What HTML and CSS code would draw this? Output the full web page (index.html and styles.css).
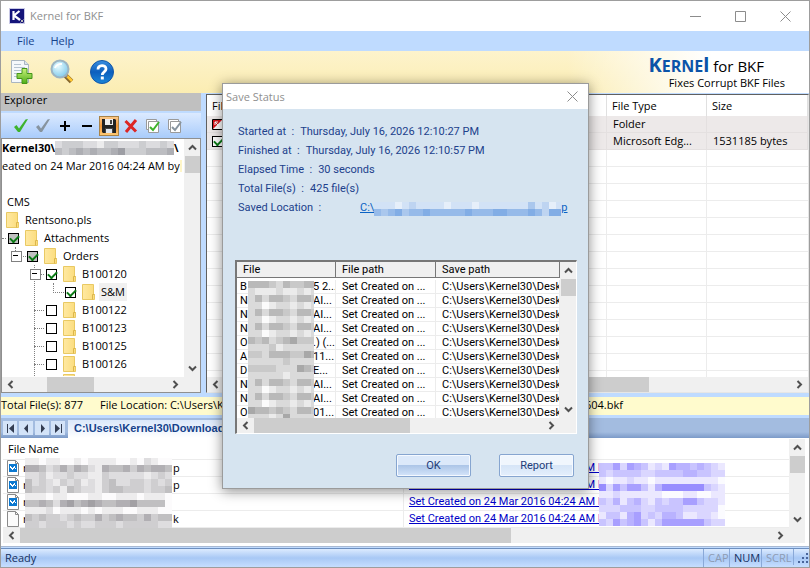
FILE: index.html
```html
<!DOCTYPE html>
<html lang="en">
<head>
<meta charset="utf-8">
<title>Kernel for BKF</title>
<link rel="stylesheet" href="styles.css">
</head>
<body>
<svg class="defs" width="0" height="0" aria-hidden="true">
  <defs>
    <linearGradient id="gFolder" x1="0" x2="1"><stop offset="0" stop-color="#ffe9a2"/><stop offset="1" stop-color="#fbdc7c"/></linearGradient>
    <linearGradient id="gHelp" x1="0" y1="0" x2="0" y2="1"><stop offset="0" stop-color="#3a8fe0"/><stop offset=".5" stop-color="#0d5fbd"/><stop offset="1" stop-color="#1b86d8"/></linearGradient>
    <linearGradient id="gPlus" x1="0" y1="0" x2="0" y2="1"><stop offset="0" stop-color="#c8f27a"/><stop offset="1" stop-color="#4fae18"/></linearGradient>
    <radialGradient id="gLens" cx=".4" cy=".35" r=".7"><stop offset="0" stop-color="#e8fbff"/><stop offset="1" stop-color="#7cc8ea"/></radialGradient>
    <symbol id="folder" viewBox="0 0 13 16"><path d="M.5.5h11v10h1v5H.5z" fill="url(#gFolder)" stroke="#e9c963"/><path d="M10.500 15.500v-5h2" fill="none" stroke="#dcb64a"/></symbol>
    <symbol id="up" viewBox="0 0 9 7"><path d="M1 5.500 4.500 2 8 5.500" fill="none" stroke="#505050" stroke-width="2"/></symbol>
    <symbol id="down" viewBox="0 0 9 7"><path d="M1 1.500 4.500 5 8 1.500" fill="none" stroke="#505050" stroke-width="2"/></symbol>
    <symbol id="left" viewBox="0 0 7 9"><path d="M5.500 1 2 4.500 5.500 8" fill="none" stroke="#505050" stroke-width="2"/></symbol>
    <symbol id="right" viewBox="0 0 7 9"><path d="M1.500 1 5 4.500 1.500 8" fill="none" stroke="#505050" stroke-width="2"/></symbol>
    <symbol id="image" viewBox="0 0 12 16"><path d="M.5.5h8l3 3v12H.5z" fill="#fff" stroke="#8a8a8a"/><path d="M8.500.5v3h3" fill="none" stroke="#8a8a8a"/><path d="M2 4h8v8H2z" fill="#0b78d0"/><path d="M3 6h1v1h1v1h1V7h1V6h1v2h1v1H8V8H7v1H6v1H5V9H4V8H3z" fill="#fff"/></symbol>
    <symbol id="page" viewBox="0 0 12 16"><path d="M.5.5h8l3 3v12H.5z" fill="#fbfbfb" stroke="#8a8a8a"/><path d="M8.500.5v3h3" fill="none" stroke="#8a8a8a"/></symbol>
  </defs>
</svg>

<div class="window">
  <header class="titlebar">
    <svg class="app-icon" width="16" height="16" viewBox="0 0 16 16"><path fill="#c9c9e6" d="M0 0h16v16H0z"/><path fill="#14147a" d="M1 1h14v14H1z"/><path d="M4.500 3v9M10.500 3 5 7.500l6 4.500" fill="none" stroke="#fff" stroke-width="2.200"/><path d="m11.500 11.500 3 3m0-3-3 3" stroke="#bbb"/></svg>
    <h1 class="title">Kernel for BKF</h1>
    <button class="caption" aria-label="Minimize"><svg width="11" height="11"><path d="M0 5.500h11" stroke="#8c8c8c"/></svg></button>
    <button class="caption" aria-label="Maximize"><svg width="11" height="11"><path d="M.5.5h10v10H.5z" fill="none" stroke="#8c8c8c"/></svg></button>
    <button class="caption" aria-label="Close"><svg width="11" height="11"><path d="m.5.5 10 10m0-10-10 10" stroke="#8c8c8c"/></svg></button>
  </header>
  <nav class="menu"><button>File</button><button>Help</button></nav>
  <div class="toolbar">
    <button class="tool" aria-label="Add file"><svg width="24" height="26" viewBox="0 0 24 26"><path d="M1.500 1.500h13l4 4v18h-17z" fill="#f5f8fb" stroke="#a9b5c0"/><path d="M14.500 1.500v4h4" fill="#dde5ec" stroke="#a9b5c0"/><path d="M4 5.500h7M4 8.500h11M4 11.500h7M4 14.500h4M4 17.500h3" stroke="#b6c3d0"/><path d="M12 9.500h5v5h5v5h-5v5h-5v-5H7v-5h5z" fill="url(#gPlus)" stroke="#45951a" stroke-linejoin="round"/></svg></button>
    <button class="tool" aria-label="Find"><svg width="24" height="26" viewBox="0 0 24 26"><path d="m15.500 16.500 6 6" stroke="#87672c" stroke-width="5"/><path d="m17 17 5 5" stroke="#ffc62f" stroke-width="2.500"/><path d="m14 15 3 3" stroke="#888" stroke-width="2"/><circle cx="10" cy="10" r="8.500" fill="url(#gLens)" stroke="#9db4c2" stroke-width="2"/><path d="M5 9a6 5 0 0 1 7-4" fill="none" stroke="#fff" stroke-width="2"/></svg></button>
    <button class="tool" aria-label="Help"><svg width="24" height="26" viewBox="0 0 24 26"><circle cx="12" cy="13" r="11.500" fill="url(#gHelp)" stroke="#1457a8"/><path d="M8 10.500c0-5 8-5 8-.5 0 3-3.700 2.800-3.700 6" fill="none" stroke="#fff" stroke-width="2.800"/><path d="M10.800 17.500h3v3h-3z" fill="#fff"/></svg></button>
    <div class="brand">
      <div class="brand-name"><b>K<small>ERNE</small>l</b> <span>for BKF</span></div>
      <div class="brand-tag">Fixes Corrupt BKF Files</div>
    </div>
  </div>

  <main class="main">
    <section class="explorer">
      <h2 class="explorer-title">Explorer</h2>
      <div class="explorer-tools">
        <button aria-label="Check"><svg width="14" height="14" viewBox="0 0 14 14"><path d="M0 8 2.500 6 5 9.500 11.500.5 14 0 6 13H4z" fill="#3eb32c"/></svg></button>
        <button aria-label="Uncheck"><svg width="14" height="14" viewBox="0 0 14 14"><path d="M0 8 2.500 6 5 9.500 11.500.5 14 0 6 13H4z" fill="#87949f"/></svg></button>
        <button aria-label="Expand"><svg width="14" height="14" viewBox="0 0 14 14"><path d="M7 2v10M2 7h10" stroke="#000" stroke-width="2"/></svg></button>
        <button aria-label="Collapse"><svg width="14" height="14" viewBox="0 0 14 14"><path d="M2 7h10" stroke="#000" stroke-width="2"/></svg></button>
        <button class="active" aria-label="Save"><svg width="14" height="14" viewBox="0 0 14 14"><path d="M0 0h13l1 1v13H1l-1-1z" fill="#222"/><path d="M3 0h8v6H3z" fill="#eee"/><path d="M8 1h2v4H8zM3 9h8v5H3z" fill="#444"/><path d="M4 10h6v4H4z" fill="#dfe6ef"/></svg></button>
        <button aria-label="Delete"><svg width="14" height="14" viewBox="0 0 14 14"><path d="M1.500 2 12 12.500M12 1 2 13" stroke="#dc2626" stroke-width="3"/></svg></button>
        <button aria-label="Check all"><svg width="14" height="14" viewBox="0 0 14 14"><path d="M.5.5h10v10H.5z" fill="#fff" stroke="#9a9a9a"/><path d="M2.500 2.500h10v11h-10z" fill="#fff" stroke="#9a9a9a"/><path d="m4 8 3 3 6-8" fill="none" stroke="#3eb32c" stroke-width="2"/></svg></button>
        <button aria-label="Uncheck all"><svg width="14" height="14" viewBox="0 0 14 14"><path d="M.5.5h10v10H.5z" fill="#fff" stroke="#9a9a9a"/><path d="M2.500 2.500h10v11h-10z" fill="#fff" stroke="#9a9a9a"/><path d="m4 8 3 3 6-8" fill="none" stroke="#87949f" stroke-width="2"/></svg></button>
      </div>
      <div class="tree-pane">
        <div class="tree-body">
          <ul class="tree">
            <li class="root"><b>Kernel30\</b><svg class="mosaic" data-ink="70,72,84" data-rows="23332213322232232|43454544563334445"></svg><b>\</b></li>
            <li>eated on 24 Mar 2016 04:24 AM by <i class="mark"></i></li>
            <li></li>
            <li class="indent">CMS</li>
            <li class="leaf"><svg class="folder"><use href="#folder"/></svg>Rentsono.pls</li>
            <li><i class="stub"></i><input class="grey" type="checkbox" checked aria-label="Attachments"><svg class="folder"><use href="#folder"/></svg>Attachments</li>
            <li><i class="lead"></i><i class="cell elbow box"></i><input class="grey" type="checkbox" checked aria-label="Orders"><svg class="folder"><use href="#folder"/></svg>Orders</li>
            <li><i class="lead"></i><i class="cell"></i><i class="cell tee box"></i><input type="checkbox" checked aria-label="B100120"><svg class="folder"><use href="#folder"/></svg>B100120</li>
            <li><i class="lead"></i><i class="cell"></i><i class="cell line"></i><i class="cell elbow"></i><input type="checkbox" checked aria-label="S&amp;M"><svg class="folder"><use href="#folder"/></svg><span class="selected">S&amp;M</span></li>
            <li><i class="lead"></i><i class="cell"></i><i class="cell tee"></i><input type="checkbox" aria-label="B100122"><svg class="folder"><use href="#folder"/></svg>B100122</li>
            <li><i class="lead"></i><i class="cell"></i><i class="cell tee"></i><input type="checkbox" aria-label="B100123"><svg class="folder"><use href="#folder"/></svg>B100123</li>
            <li><i class="lead"></i><i class="cell"></i><i class="cell tee"></i><input type="checkbox" aria-label="B100125"><svg class="folder"><use href="#folder"/></svg>B100125</li>
            <li><i class="lead"></i><i class="cell"></i><i class="cell tee"></i><input type="checkbox" aria-label="B100126"><svg class="folder"><use href="#folder"/></svg>B100126</li>
            <li class="cut"><i class="lead"></i><i class="cell"></i><i class="cell line"></i><i class="nobox"></i><svg class="folder"><use href="#folder"/></svg></li>
          </ul>
          <div class="vbar"><svg class="v"><use href="#up"/></svg><i class="thumb"></i><svg class="v end"><use href="#down"/></svg></div>
        </div>
        <div class="hbar tree-hbar"><svg class="h"><use href="#left"/></svg><i class="thumb"></i><svg class="h end"><use href="#right"/></svg></div>
      </div>
    </section>

    <section class="files">
      <div class="files-body">
        <table class="files-table">
          <colgroup><col class="c-name"><col class="c-type"><col></colgroup>
          <thead><tr><th>File Name</th><th>File Type</th><th>Size</th></tr></thead>
          <tbody>
            <tr><td><svg class="flag" width="11" height="11" viewBox="0 0 11 11"><path d="M.5.5h10v10H.5z" fill="#fff" stroke="#000"/><path d="M1 1h9L1 10z" fill="#d8141c"/><path d="m3 3 5 5M3 6V3h3" stroke="#fff" fill="none"/></svg></td><td>Folder</td><td></td></tr>
            <tr><td><input type="checkbox" checked aria-label="File"></td><td>Microsoft Edg...</td><td>1531185 bytes</td></tr>
          </tbody>
        </table>
      </div>
      <div class="hbar files-hbar"><svg class="h"><use href="#left"/></svg><i class="thumb"></i><svg class="h end"><use href="#right"/></svg></div>
    </section>
  </main>

  <div class="info"><span>Total File(s): 877</span><span class="location">File Location: C:\Users\Kernel30\Downloads</span><span class="tail">604.bkf</span></div>

  <section class="lower">
    <div class="tabs">
      <button aria-label="First"><svg width="9" height="9"><path d="M1 0h1v9H1zM8 0v9L3 4.500z" fill="#333d52"/></svg></button>
      <button aria-label="Previous"><svg width="9" height="9"><path d="M6 0v9L2 4.500z" fill="#333d52"/></svg></button>
      <button aria-label="Next"><svg width="9" height="9"><path d="M3 0v9l4-4.500z" fill="#333d52"/></svg></button>
      <button aria-label="Last"><svg width="9" height="9"><path d="M7 0h1v9H7zM1 0v9l5-4.500z" fill="#333d52"/></svg></button>
      <a class="tab" href="#results">C:\Users\Kernel30\Downloads</a>
    </div>
    <div class="results" id="results">
      <div class="results-body">
        <div class="results-view">
          <table class="results-table">
            <colgroup><col class="r-name"><col></colgroup>
            <thead><tr><th>File Name</th><th></th></tr></thead>
            <tbody>
              <tr><td><div class="name"><svg class="doc"><use href="#image"/></svg><span class="hidden-run">r</span>p</div></td><td><a href="#a">Set Created on 24 Mar 2016 04:24 AM b</a></td></tr>
              <tr><td><div class="name"><svg class="doc"><use href="#image"/></svg><span class="hidden-run">r</span>p</div></td><td><a href="#b">Set Created on 24 Mar 2016 04:24 AM b</a></td></tr>
              <tr><td><div class="name"><svg class="doc"><use href="#image"/></svg><span class="hidden-run">r</span></div></td><td><a href="#c">Set Created on 24 Mar 2016 04:24 AM b</a></td></tr>
              <tr><td><div class="name"><svg class="doc"><use href="#page"/></svg><span class="hidden-run">r</span>k</div></td><td><a href="#d">Set Created on 24 Mar 2016 04:24 AM b</a></td></tr>
            </tbody>
          </table>
          <svg class="mosaic names" data-ink="80,76,84" data-rows="110110010111100102100|554235354215445354554|223122322113222221232|423213231213422332323|433231432213443332334|111011000110011101110|445425645654455644440|111201110101110011100|434332343353454435344|332333232233323333322"></svg>
          <svg class="mosaic links" data-ink="60,40,255" data-rows="335254312154434321|323333223333443322|101121101111111110|625355314666666321|112111111000110011|324134213233553221|222333223333222220|133145232443112210|325345313555555322"></svg>
        </div>
        <div class="vbar"><svg class="v"><use href="#up"/></svg><i class="thumb"></i><svg class="v end"><use href="#down"/></svg></div>
      </div>
      <div class="hbar results-hbar"><svg class="h"><use href="#left"/></svg><i class="thumb"></i><svg class="h end"><use href="#right"/></svg></div>
    </div>
  </section>

  <footer class="status"><span class="ready">Ready</span><span class="key c1">CAP</span><span class="key c2 on">NUM</span><span class="key c3">SCRL</span><svg class="grip" width="16" height="16"><path d="M12 4h2v2h-2zM8 8h2v2H8zM12 8h2v2h-2zM4 12h2v2H4zM8 12h2v2H8zM12 12h2v2h-2z" fill="#49659b"/></svg></footer>
</div>

<div class="dialog" role="dialog" aria-labelledby="dialog-title">
  <header class="dialog-title"><h2 id="dialog-title">Save Status</h2><button aria-label="Close dialog"><svg width="11" height="11"><path d="m.5.5 10 10m0-10-10 10" stroke="#8c8c8c"/></svg></button></header>
  <div class="dialog-body">
    <dl class="facts">
      <div><dt>Started at &nbsp;:</dt><dd>Thursday, July 16, 2026 12:10:27 PM</dd></div>
      <div><dt>Finished at &nbsp;:</dt><dd>Thursday, July 16, 2026 12:10:57 PM</dd></div>
      <div><dt>Elapsed Time &nbsp;:</dt><dd>30 seconds</dd></div>
      <div><dt>Total File(s) &nbsp;:</dt><dd>425 file(s)</dd></div>
      <div><dt class="saved">Saved Location &nbsp;:</dt><dd><a href="#saved">C:\<svg class="mosaic" data-ink="20,100,205" data-rows="222123222212221222222242312|545645565555565556655565366565"></svg>p</a></dd></div>
    </dl>
    <div class="log">
      <div class="log-body">
        <div class="log-view">
          <table class="log-table">
            <colgroup><col class="l-file"><col class="l-path"><col></colgroup>
            <thead><tr><th>File</th><th>File path</th><th>Save path</th></tr></thead>
            <tbody>
              <tr><td><span class="masked">B</span>5 2...</td><td>Set Created on ...</td><td>C:\Users\Kernel30\Desktop</td></tr>
              <tr><td><span class="masked">N</span>AI...</td><td>Set Created on ...</td><td>C:\Users\Kernel30\Desktop</td></tr>
              <tr><td><span class="masked">N</span>AI...</td><td>Set Created on ...</td><td>C:\Users\Kernel30\Desktop</td></tr>
              <tr><td><span class="masked">N</span>AI...</td><td>Set Created on ...</td><td>C:\Users\Kernel30\Desktop</td></tr>
              <tr><td><span class="masked">O</span>.) (...</td><td>Set Created on ...</td><td>C:\Users\Kernel30\Desktop</td></tr>
              <tr><td><span class="masked">A</span>11...</td><td>Set Created on ...</td><td>C:\Users\Kernel30\Desktop</td></tr>
              <tr><td><span class="masked">D</span>E...</td><td>Set Created on ...</td><td>C:\Users\Kernel30\Desktop</td></tr>
              <tr><td><span class="masked">N</span>AI...</td><td>Set Created on ...</td><td>C:\Users\Kernel30\Desktop</td></tr>
              <tr><td><span class="masked">N</span>AI...</td><td>Set Created on ...</td><td>C:\Users\Kernel30\Desktop</td></tr>
              <tr><td><span class="masked">O</span>01...</td><td>Set Created on ...</td><td>C:\Users\Kernel30\Desktop</td></tr>
            </tbody>
          </table>
          <svg class="mosaic log-names" data-ink="60,60,60" data-rows="4443243344|2111211212|2424432443|2201221212|2424432443|2201221212|2424432443|2201221212|4342345333|2223122222|3324443354|2222232222|3333222543|2222212222|2424432443|2201221212|2424432443|2201221212|5443432443|2221252222"></svg>
        </div>
        <div class="vbar"><svg class="v"><use href="#up"/></svg><i class="thumb"></i><svg class="v end"><use href="#down"/></svg></div>
      </div>
      <div class="hbar log-hbar"><svg class="h"><use href="#left"/></svg><i class="thumb"></i><svg class="h end"><use href="#right"/></svg></div>
    </div>
    <div class="actions"><button class="primary">OK</button><button>Report</button></div>
  </div>
</div>
<script src="mosaic.js"></script>
</body>
</html>
```
FILE: styles.css
```css
* { box-sizing: border-box; }
body {
  margin: 0;
  font: 11px/16px "Open Sans", "Noto Sans", sans-serif;
  color: #000;
}
h1, h2, ul, dl, dd { margin: 0; padding: 0; font: inherit; list-style: none; }
button { margin: 0; padding: 0; border: 0; background: none; font: inherit; color: inherit; display: flex; align-items: center; justify-content: center; }
table { border-collapse: separate; border-spacing: 0; table-layout: fixed; width: 100%; }
th, td { padding: 0 6px; text-align: left; font-weight: normal; white-space: nowrap; overflow: hidden; }
svg { flex: none; }
.defs { position: absolute; }

input[type="checkbox"] {
  appearance: none;
  flex: none;
  width: 11px;
  height: 11px;
  margin: 0;
  border: 1px solid #000;
  background: #fff;
}
input:checked::before {
  content: "";
  display: block;
  width: 7px;
  height: 4px;
  margin: 1px;
  border: solid #0a7a14;
  border-width: 0 0 2px 2px;
  transform: rotate(-45deg);
}
input.grey { background: #c0c0c0; }

/* Window frame */
.window {
  display: flex;
  flex-direction: column;
  min-height: 100vh;
  border: 1px solid #9d9d9d;
  background: #bfdbff;
}
.titlebar { display: flex; align-items: center; height: 30px; padding: 0 1px 0 8px; background: #fff; }
.title { flex: 1; margin-left: 5px; color: #8f8f8f; }
.caption { width: 45px; height: 28px; }
.menu { display: flex; gap: 16px; height: 20px; padding-left: 16px; color: #15428b; background: #bfdbff; }
.toolbar {
  display: flex;
  align-items: center;
  height: 42px;
  padding-left: 9px;
  background: linear-gradient(90deg, transparent 70%, #fff 88%), linear-gradient(#fdf3cc, #fbedb2);
}
.tool { width: 24px; height: 26px; margin-right: 16px; }
.brand { flex: 1; padding-right: 24px; text-align: right; }
.brand-name { padding-right: 21px; font-size: 15px; line-height: 20px; }
.brand-name b { color: #0b54a8; font-size: 20px; }
.brand-name small { font-size: 16px; }
.brand-tag { line-height: 14px; }

/* Scroll bars */
.vbar { display: flex; flex-direction: column; align-items: center; flex: none; width: 16px; background: #f0f0f0; }
.hbar { display: flex; align-items: center; height: 15px; background: #f0f0f0; }
.v { width: 9px; height: 7px; margin: 5px 0; }
.h { width: 7px; height: 9px; margin: 0 5px; }
.thumb { background: #cdcdcd; }
.vbar .thumb { width: 15px; height: 17px; }
.hbar .thumb { height: 15px; }
.vbar .end { margin-top: auto; }
.hbar .end { margin-left: auto; }

/* Explorer */
.main { display: flex; flex: 1; gap: 5px; }
.explorer { display: flex; flex-direction: column; width: 200px; }
.explorer-title { height: 18px; padding-left: 3px; line-height: 14px; background: #c0c0c0; }
.explorer-tools {
  display: flex;
  align-items: center;
  gap: 2px;
  height: 25px;
  margin-top: 2px;
  padding-left: 10px;
  background: linear-gradient(#dceaff, #a9ccfb);
}
.explorer-tools button { width: 20px; height: 20px; }
.explorer-tools .active { border: 1px solid #a98348; background: linear-gradient(#fbc98a, #f29536 50%, #fdc873); }
.tree-pane { display: flex; flex-direction: column; flex: 1; border: 1px solid #8f8f8f; background: #fff; }
.tree-body { display: flex; flex: 1; }
.tree { flex: 1; min-width: 0; height: 237px; overflow: hidden; }
.tree li { display: flex; align-items: center; height: 18px; white-space: nowrap; }
.root .mosaic { width: 119px; }
.tree .indent { padding-left: 5px; }
.tree .leaf { padding-left: 4px; }
.folder { width: 13px; height: 16px; margin-right: 6px; }
.tree input { margin: 0 6px 0 2px; }
.mark { width: 2px; height: 12px; background: #fff6c8; }
.lead { flex: none; width: 4px; }
.stub { flex: none; width: 4px; border-top: 1px dotted #808080; }
.nobox { width: 19px; }
.cell { position: relative; flex: none; width: 19px; height: 18px; }
.cell::before { content: ""; position: absolute; left: 9px; top: 0; width: 10px; height: 9px; border: dotted #808080; border-width: 0; }
.elbow::before { border-width: 0 0 1px 1px; }
.tee::before { border-bottom-width: 1px; }
.line, .tee { background: repeating-linear-gradient(#808080 0 1px, transparent 1px 2px) 9px 0 / 1px 100% no-repeat; }
.box::after {
  content: "";
  position: absolute;
  left: 5px;
  top: 4px;
  width: 9px;
  height: 9px;
  border: 1px solid #808080;
  background: linear-gradient(#000, #000) 1px 3px / 5px 1px no-repeat, #fff;
}
.selected { margin-left: -2px; padding: 0 2px; background: #f0f0f0; line-height: 18px; }
.tree-hbar { padding-right: 16px; }
.tree-hbar .thumb { width: 47px; margin-left: 28px; }

/* File list */
.files { display: flex; flex-direction: column; flex: 1; min-width: 0; margin-top: 1px; border: 1px solid #e6e6e6; border-top: 1px solid #606060; border-left: 1px solid #606060; background: #fff; }
.files-body {
  flex: 1;
  background:
    linear-gradient(#ececec, #ececec) 399px 0 / 1px 100% no-repeat,
    linear-gradient(#ececec, #ececec) 499px 0 / 1px 100% no-repeat,
    repeating-linear-gradient(transparent 0 3px, #ececec 3px 4px, transparent 4px 17px);
}
.c-name { width: 400px; }
.c-type { width: 100px; }
.files-table th { height: 21px; padding: 0 5px; background: #fff; border-right: 1px solid #e0e0e0; }
.files-table td { height: 17px; background: #ede9e9; border: solid #e4e0e0; border-width: 0 1px 1px 0; line-height: 16px; }
.files-table td:first-child { padding: 0 5px; }
.files-table input, .flag { display: block; }
.files-hbar .thumb { width: 425px; }

/* Information strip */
.info { display: flex; height: 18px; margin: 4px 0 3px; background: #fffbcd; line-height: 16px; }
.location { flex: 1; margin-left: 17px; }
.tail { width: 224px; }

/* Lower pane */
.tabs { display: flex; align-items: flex-end; gap: 2px; height: 20px; padding-left: 2px; background: linear-gradient(#a3bce0 70%, #7c9ac8); }
.tabs button { width: 14px; height: 14px; margin-bottom: 3px; background: #d3e3f8; }
.tab { height: 18px; margin-left: 1px; padding: 0 6px; color: #15428b; background: linear-gradient(#dbe8fa, #fff); font: bold 11px/16px "Liberation Sans", Arial, sans-serif; text-decoration: none; }
.results { padding: 1px 4px 3px 2px; border-bottom: 1px solid #a9b9d2; background: #fff; }
.results-body { display: flex; }
.results-view { position: relative; flex: 1; min-width: 0; }
.r-name { width: 401px; }
.results-table th { height: 21px; padding: 0 5px; border-bottom: 1px solid #ececec; }
.results-table td { height: 17px; padding: 0 5px; border-bottom: 1px solid #ececec; }
.results-table td:first-child { padding: 0 4px; border-right: 1px solid #ececec; }
.name { display: flex; height: 16px; }
.doc { width: 12px; height: 16px; margin-right: 4px; }
.hidden-run { width: 150px; }
.results-table a { display: block; color: #0000c8; font: 11px/16px Roboto, "Liberation Sans", sans-serif; }
.mosaic { display: block; }
.names { position: absolute; left: 22px; top: 19px; }
.links { position: absolute; left: 596px; top: 24px; }
.results-hbar { padding-right: 16px; }
.results-hbar .thumb { width: 491px; }

/* Status bar */
.status {
  display: flex;
  height: 19px;
  margin-top: 1px;
  border-top: 1px solid #6d8fc0;
  background: linear-gradient(#dcebff, #a8c8f5 50%, #c6deff);
  color: #15305f;
  line-height: 18px;
}
.ready { flex: 1; padding-left: 4px; }
.key { padding-left: 4px; border-left: 1px solid #8aa9d8; color: #8d9bb3; }
.key.on { color: #15305f; }
.c1 { width: 26px; }
.c2 { width: 32px; }
.c3 { width: 31px; }
.grip { margin-left: 1px; border-left: 1px solid #8aa9d8; }

/* Save status dialog */
.dialog {
  position: absolute;
  left: 222px;
  top: 83px;
  width: 367px;
  border: 1px solid #9b9b9b;
  background: #d6e4f0;
  box-shadow: 0 2px 12px rgba(0, 0, 0, .45);
  font: 11px/16px Roboto, "Liberation Sans", sans-serif;
}
.dialog-title { display: flex; align-items: center; justify-content: space-between; height: 25px; padding: 0 10px 0 3px; background: #fff; color: #8f8f8f; font: 11px/16px "Open Sans", "Noto Sans", sans-serif; }
.dialog-body { padding: 15px 11px 11px 12px; }
.facts { display: flex; flex-direction: column; gap: 3px; height: 136px; padding-left: 3px; color: #21418c; }
.facts div { display: flex; gap: 6px; }
.saved { width: 116px; }
.facts a { display: flex; color: #0b62c4; }
.facts .mosaic { width: 187px; margin-top: 2px; }
.log { border: solid #fff; border-width: 2px 1px 1px 2px; border-top-color: #777; border-left-color: #777; background: #fff; }
.log-body { display: flex; }
.log-view { position: relative; flex: 1; min-width: 0; height: 156px; overflow: hidden; }
.l-file { width: 99px; }
.l-path { width: 100px; }
.log-table th { height: 16px; background: #f0f0f0; border: solid #777; border-width: 0 1px 1px 0; line-height: 14px; }
.log-table td { height: 14px; line-height: 13px; border: solid #ececec; border-width: 0 1px 1px 0; text-overflow: clip; }
.log-table td:first-child { padding: 0 3px; }
.log-table tbody::before { content: ""; display: block; height: 2px; }
.masked { display: inline-block; width: 73px; }
.log-names { position: absolute; left: 11px; top: 19px; width: 66px; }
.log-hbar .thumb { width: 156px; }
.log-hbar { padding-right: 16px; }
.actions { display: flex; justify-content: flex-end; gap: 28px; margin-top: 20px; padding-right: 3px; }
.actions button { width: 75px; height: 23px; border: 1px solid #86a5d0; border-radius: 2px; background: linear-gradient(#f0f6fd 50%, #d6e5f7 50%, #e4effc); box-shadow: inset 0 0 0 1px #f5f9ff; color: #1e3c78; }
.actions .primary { background: linear-gradient(#dce9fa 50%, #adc6e8 50%, #d5e5fa); }
```
FILE: mosaic.js
```js
// Paints the censored areas: each digit is the ink strength of one 7px tile.
document.querySelectorAll('.mosaic').forEach(function (svg) {
  var tile = 7;
  var rows = svg.dataset.rows.split('|');
  var ink = svg.dataset.ink.split(',').map(Number);
  svg.setAttribute('width', rows[0].length * tile);
  svg.setAttribute('height', rows.length * tile);
  svg.setAttribute('shape-rendering', 'crispEdges');
  rows.forEach(function (row, y) {
    row.split('').forEach(function (digit, x) {
      var t = Number(digit) * 0.085 + 0.02;
      var fill = ink.map(function (c) { return Math.round(255 + (c - 255) * t); });
      var rect = document.createElementNS('http://www.w3.org/2000/svg', 'rect');
      rect.setAttribute('x', x * tile);
      rect.setAttribute('y', y * tile);
      rect.setAttribute('width', tile);
      rect.setAttribute('height', tile);
      rect.setAttribute('fill', 'rgb(' + fill.join(',') + ')');
      svg.appendChild(rect);
    });
  });
});
```
